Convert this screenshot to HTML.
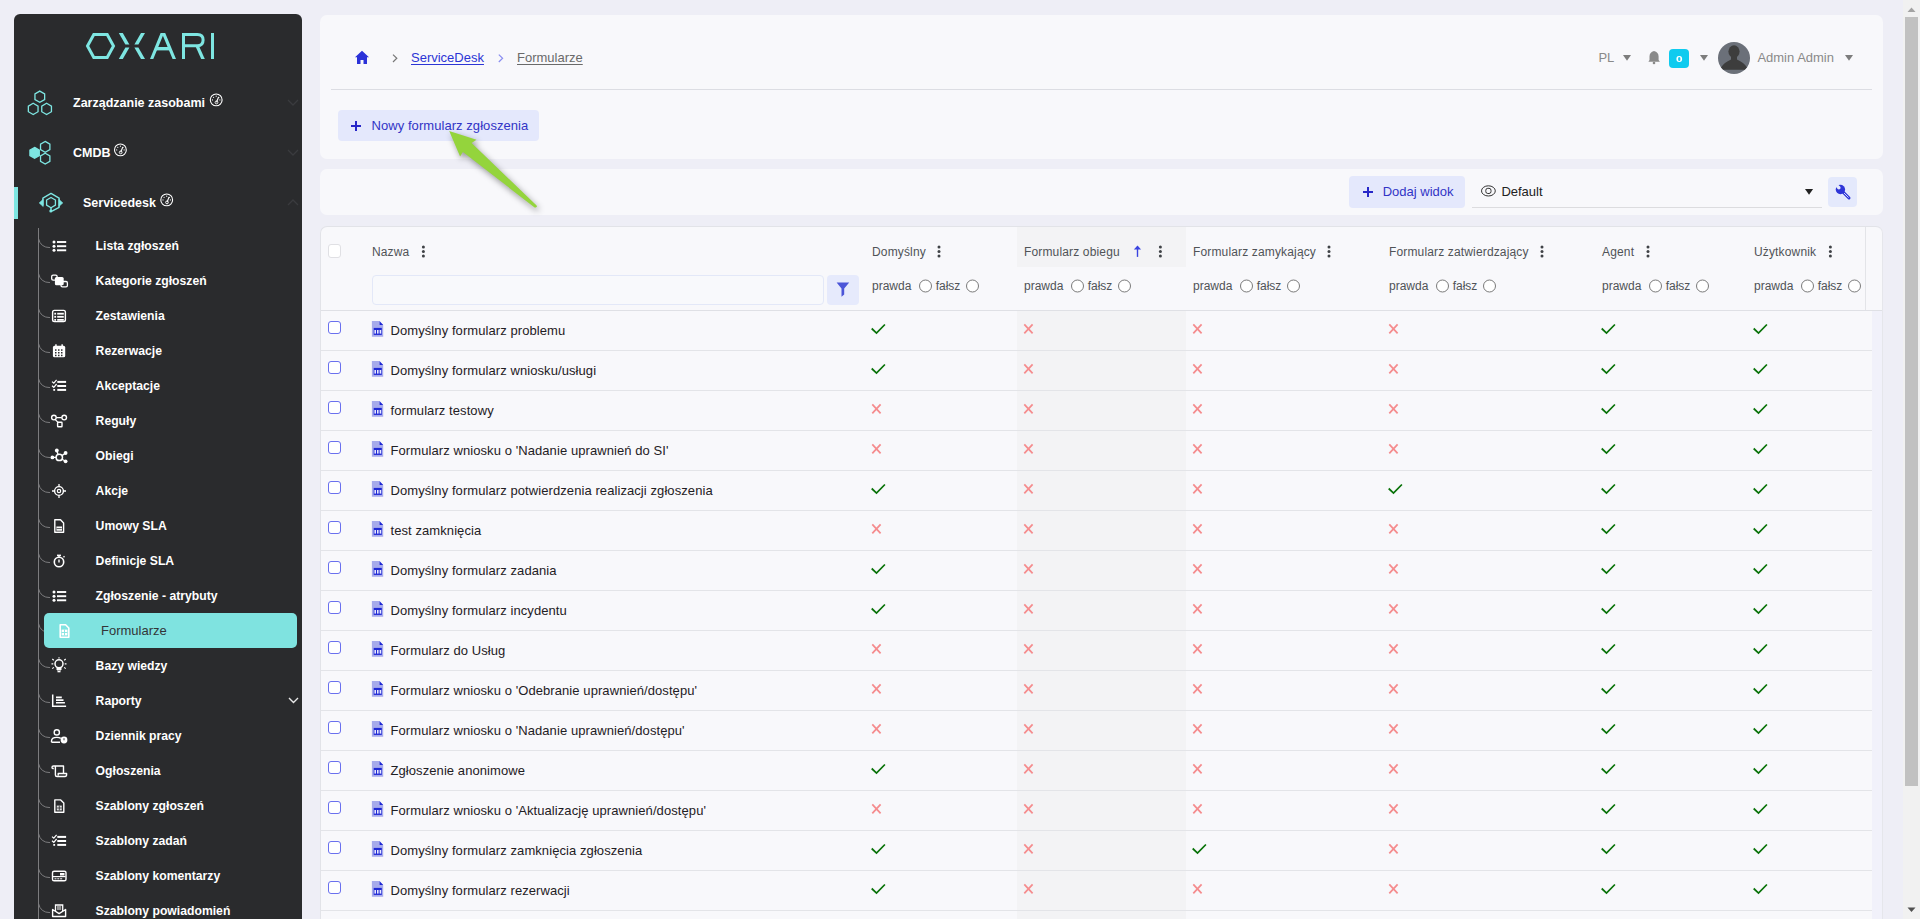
<!DOCTYPE html><html><head><meta charset="utf-8"><style>
*{box-sizing:border-box}
html,body{margin:0;padding:0}
body{width:1920px;height:919px;overflow:hidden;position:relative;background:#eeeef6;font-family:"Liberation Sans",sans-serif}
.t{position:absolute;white-space:nowrap;line-height:1.117}
.a{position:absolute}
svg{position:absolute;overflow:visible}
</style></head><body>
<div class="a" style="left:14px;top:14px;width:288px;height:920px;background:#2a2b2d;border-radius:6px"></div>
<svg style="left:0;top:0" width="1" height="1">
<polygon points="87.5,46 93.8,34.5 107.2,34.5 113.5,46 107.2,57.5 93.8,57.5" fill="none" stroke="#7ee6e2" stroke-width="3"/>
<g fill="#7ee6e2">
<polygon points="118.8,33 122.8,33 129.4,44.6 125.4,44.6"/>
<polygon points="125.4,47.4 129.4,47.4 122.8,59 118.8,59"/>
<polygon points="141,33 145,33 138.4,44.6 134.4,44.6"/>
<polygon points="134.4,47.4 138.4,47.4 145,59 141,59"/>
<polygon points="160.6,33 165.2,33 176,59 172.6,59 162.9,35.8 153.3,59 150,59"/>
<rect x="156" y="47" width="13.6" height="3.4"/>
<rect x="182" y="33" width="3" height="26"/>
<path d="M182 33 H197.5 Q204.6 33 204.6 40 Q204.6 47.2 197.5 47.2 H185 V44.2 H197.3 Q201.6 44.2 201.6 40 Q201.6 36 197.3 36 H182 Z"/>
<polygon points="195.6,46.5 199.2,46.5 204.8,59 201.2,59"/>
<rect x="211" y="33" width="3" height="26"/>
</g></svg>
<svg style="left:0;top:0" width="1" height="1" fill="none" stroke="#7ee6e2" stroke-width="1.3">
<polygon points="39.80,91.10 44.65,93.90 44.65,99.50 39.80,102.30 34.95,99.50 34.95,93.90"/>
<polygon points="33.20,103.30 38.05,106.10 38.05,111.70 33.20,114.50 28.35,111.70 28.35,106.10"/>
<polygon points="46.60,103.30 51.45,106.10 51.45,111.70 46.60,114.50 41.75,111.70 41.75,106.10"/>
<polygon points="34.60,147.40 39.28,150.10 39.28,155.50 34.60,158.20 29.92,155.50 29.92,150.10" fill="#7ee6e2"/>
<polygon points="45.20,141.40 49.88,144.10 49.88,149.50 45.20,152.20 40.52,149.50 40.52,144.10"/>
<polygon points="45.20,153.20 49.88,155.90 49.88,161.30 45.20,164.00 40.52,161.30 40.52,155.90"/>
</svg>
<svg style="left:0;top:0" width="1" height="1" fill="none" stroke="#7ee6e2" stroke-width="1.4" stroke-linejoin="round">
<path d="M42.9 205.6 V198.05 L51 193.4 L59.1 198.05 V207.35 L52 211.2"/>
<polygon points="51.00,197.50 55.42,200.05 55.42,205.15 51.00,207.70 46.58,205.15 46.58,200.05" stroke-width="1.3"/>
<polygon points="39.2,202.9 43.2,199.2 43.2,206.6" fill="#7ee6e2" stroke-width="0.6"/>
<polygon points="62.8,202.9 58.8,199.2 58.8,206.6" fill="#7ee6e2" stroke-width="0.6"/>
<path d="M51 207.6 V210.5" stroke-width="1.5"/>
<circle cx="50.8" cy="211" r="1.5" fill="#7ee6e2" stroke="none"/>
</svg>
<div class="t" style="left:73px;top:96.59px;font-size:12.5px;color:#ffffff;font-weight:700;">Zarządzanie zasobami</div>
<svg style="left:0;top:0" width="1" height="1"><circle cx="216.2" cy="99.9" r="5.9" fill="none" stroke="#fff" stroke-width="1.1"/><path d="M216.5 102.30000000000001 L218.6 97.0" stroke="#fff" stroke-width="1.1"/><circle cx="216.5" cy="102.4" r="1.4" fill="none" stroke="#fff" stroke-width="0.9"/><circle cx="216.20" cy="96.20" r="0.6" fill="#fff"/><circle cx="218.82" cy="97.28" r="0.6" fill="#fff"/><circle cx="219.90" cy="99.90" r="0.6" fill="#fff"/><circle cx="212.50" cy="99.90" r="0.6" fill="#fff"/><circle cx="213.58" cy="97.28" r="0.6" fill="#fff"/></svg>
<div class="t" style="left:73px;top:146.59px;font-size:12.5px;color:#ffffff;font-weight:700;">CMDB</div>
<svg style="left:0;top:0" width="1" height="1"><circle cx="120.4" cy="149.9" r="5.9" fill="none" stroke="#fff" stroke-width="1.1"/><path d="M120.7 152.3 L122.80000000000001 147.0" stroke="#fff" stroke-width="1.1"/><circle cx="120.7" cy="152.4" r="1.4" fill="none" stroke="#fff" stroke-width="0.9"/><circle cx="120.40" cy="146.20" r="0.6" fill="#fff"/><circle cx="123.02" cy="147.28" r="0.6" fill="#fff"/><circle cx="124.10" cy="149.90" r="0.6" fill="#fff"/><circle cx="116.70" cy="149.90" r="0.6" fill="#fff"/><circle cx="117.78" cy="147.28" r="0.6" fill="#fff"/></svg>
<div class="t" style="left:83px;top:196.59px;font-size:12.5px;color:#ffffff;font-weight:700;">Servicedesk</div>
<svg style="left:0;top:0" width="1" height="1"><circle cx="166.7" cy="199.9" r="5.9" fill="none" stroke="#fff" stroke-width="1.1"/><path d="M167.0 202.3 L169.1 197.0" stroke="#fff" stroke-width="1.1"/><circle cx="167.0" cy="202.4" r="1.4" fill="none" stroke="#fff" stroke-width="0.9"/><circle cx="166.70" cy="196.20" r="0.6" fill="#fff"/><circle cx="169.32" cy="197.28" r="0.6" fill="#fff"/><circle cx="170.40" cy="199.90" r="0.6" fill="#fff"/><circle cx="163.00" cy="199.90" r="0.6" fill="#fff"/><circle cx="164.08" cy="197.28" r="0.6" fill="#fff"/></svg>
<div class="a" style="left:14px;top:187px;width:4px;height:32px;background:#7ee6e2"></div>
<svg style="left:0;top:0" width="1" height="1" fill="none" stroke="#3a3b3e" stroke-width="1.3">
<path d="M288 100 L293 105 L298 100"/><path d="M288 150 L293 155 L298 150"/><path d="M288 205 L293 200 L298 205"/>
</svg>
<div class="a" style="left:38px;top:228px;width:1px;height:700px;background:#7c7c7e"></div>
<svg style="left:0;top:0" width="1" height="1" fill="none" stroke="#7c7c7e" stroke-width="1"><path d="M38.5 238.6 Q40.5 247.6 50 247.6"/><path d="M38.5 273.6 Q40.5 282.6 50 282.6"/><path d="M38.5 308.6 Q40.5 317.6 50 317.6"/><path d="M38.5 343.6 Q40.5 352.6 50 352.6"/><path d="M38.5 378.6 Q40.5 387.6 50 387.6"/><path d="M38.5 413.6 Q40.5 422.6 50 422.6"/><path d="M38.5 448.6 Q40.5 457.6 50 457.6"/><path d="M38.5 483.6 Q40.5 492.6 50 492.6"/><path d="M38.5 518.6 Q40.5 527.6 50 527.6"/><path d="M38.5 553.6 Q40.5 562.6 50 562.6"/><path d="M38.5 588.6 Q40.5 597.6 50 597.6"/><path d="M38.5 623.6 Q40.5 632.6 50 632.6"/><path d="M38.5 658.6 Q40.5 667.6 50 667.6"/><path d="M38.5 693.6 Q40.5 702.6 50 702.6"/><path d="M38.5 728.6 Q40.5 737.6 50 737.6"/><path d="M38.5 763.6 Q40.5 772.6 50 772.6"/><path d="M38.5 798.6 Q40.5 807.6 50 807.6"/><path d="M38.5 833.6 Q40.5 842.6 50 842.6"/><path d="M38.5 868.6 Q40.5 877.6 50 877.6"/><path d="M38.5 903.6 Q40.5 912.6 50 912.6"/></svg>
<div class="a" style="left:44px;top:613px;width:253px;height:35px;background:#7fe3e0;border-radius:5px"></div>
<div class="t" style="left:95.6px;top:239.86px;font-size:12.2px;color:#ffffff;font-weight:700;">Lista zgłoszeń</div>
<div class="t" style="left:95.6px;top:274.86px;font-size:12.2px;color:#ffffff;font-weight:700;">Kategorie zgłoszeń</div>
<div class="t" style="left:95.6px;top:309.86px;font-size:12.2px;color:#ffffff;font-weight:700;">Zestawienia</div>
<div class="t" style="left:95.6px;top:344.86px;font-size:12.2px;color:#ffffff;font-weight:700;">Rezerwacje</div>
<div class="t" style="left:95.6px;top:379.86px;font-size:12.2px;color:#ffffff;font-weight:700;">Akceptacje</div>
<div class="t" style="left:95.6px;top:414.86px;font-size:12.2px;color:#ffffff;font-weight:700;">Reguły</div>
<div class="t" style="left:95.6px;top:449.86px;font-size:12.2px;color:#ffffff;font-weight:700;">Obiegi</div>
<div class="t" style="left:95.6px;top:484.86px;font-size:12.2px;color:#ffffff;font-weight:700;">Akcje</div>
<div class="t" style="left:95.6px;top:519.86px;font-size:12.2px;color:#ffffff;font-weight:700;">Umowy SLA</div>
<div class="t" style="left:95.6px;top:554.86px;font-size:12.2px;color:#ffffff;font-weight:700;">Definicje SLA</div>
<div class="t" style="left:95.6px;top:589.86px;font-size:12.2px;color:#ffffff;font-weight:700;">Zgłoszenie - atrybuty</div>
<div class="t" style="left:101px;top:624.44px;font-size:13px;color:#333538;font-weight:400;">Formularze</div>
<div class="t" style="left:95.6px;top:659.86px;font-size:12.2px;color:#ffffff;font-weight:700;">Bazy wiedzy</div>
<div class="t" style="left:95.6px;top:694.86px;font-size:12.2px;color:#ffffff;font-weight:700;">Raporty</div>
<div class="t" style="left:95.6px;top:729.86px;font-size:12.2px;color:#ffffff;font-weight:700;">Dziennik pracy</div>
<div class="t" style="left:95.6px;top:764.86px;font-size:12.2px;color:#ffffff;font-weight:700;">Ogłoszenia</div>
<div class="t" style="left:95.6px;top:799.86px;font-size:12.2px;color:#ffffff;font-weight:700;">Szablony zgłoszeń</div>
<div class="t" style="left:95.6px;top:834.86px;font-size:12.2px;color:#ffffff;font-weight:700;">Szablony zadań</div>
<div class="t" style="left:95.6px;top:869.86px;font-size:12.2px;color:#ffffff;font-weight:700;">Szablony komentarzy</div>
<div class="t" style="left:95.6px;top:904.86px;font-size:12.2px;color:#ffffff;font-weight:700;">Szablony powiadomień</div>
<svg style="left:0;top:0" width="1" height="1"><circle cx="54" cy="242.0" r="1.5" fill="#ffffff"/><rect x="57" y="241.05" width="9.2" height="1.9" fill="#ffffff"/><circle cx="54" cy="246.2" r="1.5" fill="#ffffff"/><rect x="57" y="245.25" width="9.2" height="1.9" fill="#ffffff"/><circle cx="54" cy="250.3" r="1.5" fill="#ffffff"/><rect x="57" y="249.35000000000002" width="9.2" height="1.9" fill="#ffffff"/><rect x="51.7" y="275.1" width="5.4" height="5" rx="1.4" fill="none" stroke="#ffffff" stroke-width="1.3"/><rect x="61" y="281.5" width="6.4" height="5.4" rx="1.4" fill="none" stroke="#ffffff" stroke-width="1.3"/><rect x="54.9" y="276.9" width="8.8" height="8.3" rx="1.5" fill="#ffffff"/><rect x="52.6" y="310.4" width="12.8" height="11.2" rx="1.8" fill="none" stroke="#ffffff" stroke-width="1.4"/><rect x="54.3" y="312.8" width="1.8" height="1.8" fill="#ffffff"/><rect x="57.2" y="312.8" width="6.6" height="1.8" fill="#ffffff"/><rect x="54.3" y="315.9" width="1.8" height="1.8" fill="#ffffff"/><rect x="57.2" y="315.9" width="6.6" height="1.8" fill="#ffffff"/><rect x="54.3" y="319.0" width="1.8" height="1.8" fill="#ffffff"/><rect x="57.2" y="319.0" width="6.6" height="1.8" fill="#ffffff"/><rect x="52.9" y="345.8" width="12.3" height="11.5" rx="1.6" fill="#ffffff"/><rect x="55.2" y="344.3" width="1.5" height="2.5" fill="#ffffff"/><rect x="61.4" y="344.3" width="1.5" height="2.5" fill="#ffffff"/><rect x="55" y="349.3" width="1.5" height="1.5" fill="#2a2b2d"/><rect x="58" y="349.3" width="1.5" height="1.5" fill="#2a2b2d"/><rect x="61" y="349.3" width="1.5" height="1.5" fill="#2a2b2d"/><rect x="55" y="352.0" width="1.5" height="1.5" fill="#2a2b2d"/><rect x="58" y="352.0" width="1.5" height="1.5" fill="#2a2b2d"/><rect x="61" y="352.0" width="1.5" height="1.5" fill="#2a2b2d"/><rect x="55" y="354.7" width="1.5" height="1.5" fill="#2a2b2d"/><rect x="58" y="354.7" width="1.5" height="1.5" fill="#2a2b2d"/><rect x="61" y="354.7" width="1.5" height="1.5" fill="#2a2b2d"/><path d="M52 381.59999999999997 L53.8 383.2 L56.6 379.9" fill="none" stroke="#ffffff" stroke-width="1.2"/><rect x="57.3" y="380.9" width="8.8" height="2" fill="#ffffff"/><path d="M52 385.7 L53.8 387.3 L56.6 384.0" fill="none" stroke="#ffffff" stroke-width="1.2"/><rect x="57.3" y="385.0" width="8.8" height="2" fill="#ffffff"/><rect x="53.3" y="389.0" width="1.8" height="1.8" fill="#ffffff"/><rect x="57.3" y="388.9" width="8.8" height="2" fill="#ffffff"/><path d="M56.4 417.6 H61.7 M55.3 419.6 L58 422.4" stroke="#ffffff" stroke-width="1.3"/><circle cx="53.9" cy="417.6" r="2.3" fill="none" stroke="#ffffff" stroke-width="1.4"/><circle cx="64.2" cy="417.6" r="2.3" fill="none" stroke="#ffffff" stroke-width="1.4"/><rect x="57.6" y="422.3" width="4.4" height="4.4" rx="0.5" fill="none" stroke="#ffffff" stroke-width="1.4"/><path d="M52.4 457.4 H56 M56.8 450.5 L58 454.2 M65.6 453.0 L62 455.6 M65.6 461.3 L62 459.2" stroke="#ffffff" stroke-width="1.3"/><circle cx="59.3" cy="457.4" r="3.2" fill="none" stroke="#ffffff" stroke-width="1.5"/><circle cx="56.8" cy="450.5" r="1.9" fill="#ffffff"/><circle cx="65.6" cy="453.0" r="1.9" fill="#ffffff"/><circle cx="65.6" cy="461.3" r="1.9" fill="#ffffff"/><circle cx="52.4" cy="457.4" r="1.9" fill="#ffffff"/><circle cx="59" cy="491.0" r="4.4" fill="none" stroke="#ffffff" stroke-width="1.4"/><circle cx="59" cy="491.0" r="1.7" fill="none" stroke="#ffffff" stroke-width="1.2"/><path d="M59 484.0 V486.6 M59 495.4 V498.0 M52 491.0 H54.6 M63.4 491.0 H66" stroke="#ffffff" stroke-width="1.3"/><path d="M54.8 519.8 H60.5 L63.6 523.0 V532.3 H54.8 Z" fill="none" stroke="#ffffff" stroke-width="1.4" stroke-linejoin="round"/><rect x="56.4" y="526.5" width="5.6" height="4.2" fill="#ffffff"/><path d="M56.6 528.6 H61.8" stroke="#2a2b2d" stroke-width="0.8"/><circle cx="59" cy="562.0" r="4.7" fill="none" stroke="#ffffff" stroke-width="1.6"/><rect x="57" y="554.6" width="4" height="1.6" fill="#ffffff"/><path d="M59 556.0 V557.5 M59 559.5 V562.5 M63.5 557.3 L64.5 556.3" stroke="#ffffff" stroke-width="1.4"/><circle cx="54" cy="592.0" r="1.5" fill="#ffffff"/><rect x="57" y="591.05" width="9.2" height="1.9" fill="#ffffff"/><circle cx="54" cy="596.2" r="1.5" fill="#ffffff"/><rect x="57" y="595.25" width="9.2" height="1.9" fill="#ffffff"/><circle cx="54" cy="600.3" r="1.5" fill="#ffffff"/><rect x="57" y="599.3499999999999" width="9.2" height="1.9" fill="#ffffff"/><path d="M60.2 624.8 H65.6 L68.8 628.0 V637.2 H60.2 Z" fill="none" stroke="#ffffff" stroke-width="1.6" stroke-linejoin="round"/><rect x="61.6" y="629.6" width="5.8" height="5.8" fill="#ffffff"/><path d="M61.6 632.5 H67.4 M64.5 629.6 V635.4" stroke="#7fe3e0" stroke-width="0.9"/><circle cx="59" cy="663.8" r="4" fill="none" stroke="#ffffff" stroke-width="1.5"/><path d="M57 667.5 V670.0 H61 V667.5" fill="#ffffff" stroke="#ffffff" stroke-width="1"/><rect x="57.5" y="671.0" width="3" height="1.3" fill="#ffffff"/><path d="M51.5 663.8 H53.3 M64.7 663.8 H66.5 M52.3 659.0 L53.8 660.2 M65.7 659.0 L64.2 660.2 M52.3 668.6 L53.8 667.4 M65.7 668.6 L64.2 667.4 M59 657.2 V658.4" stroke="#ffffff" stroke-width="1.2"/><path d="M52.7 694.6 V706.2 H66.1" fill="none" stroke="#ffffff" stroke-width="1.5"/><path d="M56 697.4 H61.8 M56 700.1 H63.5 M56 702.8 H64.9" stroke="#ffffff" stroke-width="1.6"/><circle cx="56.8" cy="732.4" r="2.6" fill="none" stroke="#ffffff" stroke-width="1.4"/><path d="M51.5 742.3 V741.0 Q51.5 737.4 56.8 737.4 Q59.5 737.4 60.8 738.4 M51.5 742.3 H60" fill="none" stroke="#ffffff" stroke-width="1.4"/><circle cx="64" cy="740.0" r="3.4" fill="#ffffff"/><path d="M64 738.2 V740.3" stroke="#2a2b2d" stroke-width="0.9"/><path d="M53.8 768.5 H52.8 Q52 768.5 52 767.3 Q52 766.0 53.5 766.0 H63.5 V773.5 M55.4 766.5 V775.0 Q55.4 776.5 57 776.5 H65 Q66.6 776.5 66.6 774.5 V773.5 H58.2 V775.5" fill="none" stroke="#ffffff" stroke-width="1.4" stroke-linejoin="round"/><path d="M54.8 799.9 H60.7 L63.8 803.0 V812.3 H54.8 Z" fill="none" stroke="#ffffff" stroke-width="1.4" stroke-linejoin="round"/><rect x="56.8" y="805.6" width="5" height="4.8" fill="#ffffff" opacity="0.85"/><path d="M56.8 808.0 H61.8 M59.3 805.6 V810.4" stroke="#2a2b2d" stroke-width="0.8"/><path d="M52 836.6 L53.8 838.1999999999999 L56.6 834.9" fill="none" stroke="#ffffff" stroke-width="1.2"/><rect x="57.3" y="835.9" width="8.8" height="2" fill="#ffffff"/><path d="M52 840.7 L53.8 842.3 L56.6 839.0" fill="none" stroke="#ffffff" stroke-width="1.2"/><rect x="57.3" y="840.0" width="8.8" height="2" fill="#ffffff"/><rect x="53.3" y="844.0" width="1.8" height="1.8" fill="#ffffff"/><rect x="57.3" y="843.9" width="8.8" height="2" fill="#ffffff"/><rect x="52.5" y="871.2" width="13.5" height="9.6" rx="1.6" fill="none" stroke="#ffffff" stroke-width="1.4"/><rect x="60" y="873.0" width="4.5" height="2.5" fill="#ffffff"/><path d="M53 876.6 H65.5" stroke="#ffffff" stroke-width="1.2"/><path d="M54.5 878.8 H63" stroke="#ffffff" stroke-width="1" stroke-dasharray="2 0.8"/><path d="M52.6 909.5 V916.5 H65.6 V909.5 L59.1 913.6 Z" fill="none" stroke="#ffffff" stroke-width="1.4" stroke-linejoin="round"/><path d="M55.5 911.0 V905.0 H62.7 V911.0" fill="none" stroke="#ffffff" stroke-width="1.3"/><path d="M57 907.0 H61.2 M57 909.0 H61.2" stroke="#ffffff" stroke-width="1"/></svg>
<svg style="left:0;top:0" width="1" height="1"><path d="M289 698 L293.5 702.5 L298 698" fill="none" stroke="#e8e8e8" stroke-width="1.4"/></svg>
<div class="a" style="left:320px;top:15px;width:1563px;height:144px;background:#f8f8fb;border-radius:7px"></div>
<svg style="left:0;top:0" width="1" height="1"><path d="M362 50.8 L355 57.2 L357 57.2 L357 64 L360.5 64 L360.5 60 L363.5 60 L363.5 64 L367 64 L367 57.2 L369 57.2 Z" fill="#2b32d8"/></svg>
<svg style="left:0;top:0" width="1" height="1" fill="none" stroke-width="1.2"><path d="M393 54.6 L396.8 58.3 L393 62" stroke="#777"/><path d="M498.8 54.6 L502.6 58.3 L498.8 62" stroke="#8a8ef0"/></svg>
<div class="t" style="left:411px;top:51.13px;font-size:13px;color:#2c35d5;font-weight:400;text-decoration:underline;text-underline-offset:1.5px">ServiceDesk</div>
<div class="t" style="left:517px;top:51.13px;font-size:13px;color:#6a6a6a;font-weight:400;text-decoration:underline;text-underline-offset:1.5px">Formularze</div>
<div class="t" style="left:1598.4px;top:51.44px;font-size:13px;color:#8a8a8a;font-weight:400;">PL</div>
<svg style="left:0;top:0" width="1" height="1"><polygon points="1623,55 1631,55 1627.0,60.8" fill="#7d7d7d"/><polygon points="1700,55 1708,55 1704.0,60.8" fill="#7d7d7d"/><polygon points="1845,55 1853,55 1849.0,60.8" fill="#7d7d7d"/></svg>
<svg style="left:0;top:0" width="1" height="1"><path d="M1654 51 Q1649.5 52 1649.5 56.5 L1649.5 60 L1648.4 61.8 L1659.9 61.8 L1658.6 60 L1658.6 56.5 Q1658.6 52 1654 51 Z" fill="#8a8a8a"/><circle cx="1654" cy="63" r="1.3" fill="#8a8a8a"/></svg>
<div class="a" style="left:1669px;top:49px;width:20px;height:19px;background:#0fcbef;border-radius:4px"></div>
<div class="t" style="left:1676.3px;top:53.50px;font-size:9.5px;color:#ffffff;font-weight:700;transform:scaleX(1.25);transform-origin:0 0">0</div>
<div class="a" style="left:1718px;top:42px;width:32px;height:32px;background:#6b7079;border-radius:50%;overflow:hidden"><svg style="left:0;top:0" width="32" height="32"><ellipse cx="16" cy="9.6" rx="5.6" ry="6.3" fill="#3d3d3d"/><path d="M3 25.5 Q6 20.5 13 17.5 V14 H19 V17.5 Q26 20.5 29 25.5 V27.8 H3 Z" fill="#3d3d3d"/></svg></div>
<div class="t" style="left:1757.4px;top:51.44px;font-size:13px;color:#8a8a8a;font-weight:400;">Admin Admin</div>
<div class="a" style="left:331px;top:89px;width:1541px;height:1px;background:#dcdde3"></div>
<div class="a" style="left:338px;top:110px;width:201px;height:31px;background:#e4e8fc;border-radius:4px"></div>
<svg style="left:0;top:0" width="1" height="1"><path d="M351 126 H361 M356 121 V131" stroke="#2727c8" stroke-width="2"/></svg>
<div class="t" style="left:371.5px;top:119.23px;font-size:13px;color:#3234c6;font-weight:400;letter-spacing:0.06px">Nowy formularz zgłoszenia</div>
<div class="a" style="left:320px;top:169px;width:1563px;height:46px;background:#f8f8fb;border-radius:7px"></div>
<div class="a" style="left:1349px;top:176px;width:116px;height:31.5px;background:#e4e8fc;border-radius:4px"></div>
<svg style="left:0;top:0" width="1" height="1"><path d="M1363 192 H1373 M1368 187 V197" stroke="#2727c8" stroke-width="2"/></svg>
<div class="t" style="left:1382.7px;top:184.94px;font-size:13px;color:#3234c6;font-weight:400;">Dodaj widok</div>
<div class="a" style="left:1472px;top:207px;width:350px;height:1px;background:#dcdcdf"></div>
<svg style="left:0;top:0" width="1" height="1"><ellipse cx="1488.4" cy="190.9" rx="6.9" ry="5.1" fill="none" stroke="#333" stroke-width="1"/><rect x="1485.8" y="188.3" width="5.2" height="5.2" rx="2" fill="none" stroke="#333" stroke-width="1"/></svg>
<div class="t" style="left:1501.4px;top:184.94px;font-size:13px;color:#222;font-weight:400;">Default</div>
<svg style="left:0;top:0" width="1" height="1"><polygon points="1805,189 1813.1,189 1809.05,194.7" fill="#222"/></svg>
<div class="a" style="left:1828px;top:177px;width:29px;height:30px;background:#e4e9fc;border-radius:4px"></div>
<svg style="left:0;top:0" width="1" height="1"><path d="M1843 192 L1849 198" stroke="#2e35d8" stroke-width="3" stroke-linecap="round"/><path d="M1844 193 L1848.6 197.6" stroke="#e4e9fc" stroke-width="0.9"/><circle cx="1840.4" cy="189.5" r="4.7" fill="#2e35d8"/><circle cx="1838.9" cy="187.7" r="1.7" fill="#e4e9fc"/><path d="M1838.9 187.7 L1836.4 185.2" stroke="#e4e9fc" stroke-width="3.2"/></svg>
<div class="a" style="left:320px;top:225.5px;width:1563px;height:720px;background:#f8f8fb;border:1px solid #e2e3e8;border-right-color:#e5e6eb;border-radius:7px"></div>
<div class="a" style="left:1017px;top:227px;width:169px;height:40px;background:#f3f3f5"></div>
<div class="a" style="left:1017px;top:311px;width:169px;height:620px;background:#f3f3f5"></div>
<div class="a" style="left:1872px;top:311px;width:10px;height:620px;background:#f1f1fa"></div>
<div class="a" style="left:1865px;top:227px;width:1px;height:83px;background:#e3e4e8"></div>
<div class="a" style="left:321px;top:310px;width:1561px;height:1px;background:#dfe0e5"></div>
<div class="a" style="left:328px;top:243.5px;width:13px;height:14px;background:#fff;border:1px solid #e0e0e4;border-radius:3px"></div>
<div class="t" style="left:372px;top:246.14px;font-size:12px;color:#505357;font-weight:400;letter-spacing:0.1px">Nazwa</div>
<div class="t" style="left:872px;top:246.14px;font-size:12px;color:#505357;font-weight:400;letter-spacing:0.15px">Domyślny</div>
<div class="t" style="left:1024px;top:246.14px;font-size:12px;color:#505357;font-weight:400;letter-spacing:0.15px">Formularz obiegu</div>
<div class="t" style="left:1193px;top:246.14px;font-size:12px;color:#505357;font-weight:400;letter-spacing:0.15px">Formularz zamykający</div>
<div class="t" style="left:1389px;top:246.14px;font-size:12px;color:#505357;font-weight:400;letter-spacing:0.15px">Formularz zatwierdzający</div>
<div class="t" style="left:1602px;top:246.14px;font-size:12px;color:#505357;font-weight:400;letter-spacing:0.15px">Agent</div>
<div class="t" style="left:1754px;top:246.14px;font-size:12px;color:#505357;font-weight:400;letter-spacing:0.15px">Użytkownik</div>
<svg style="left:0;top:0" width="1" height="1" fill="#3f4246"><circle cx="423.4" cy="247" r="1.5"/><circle cx="423.4" cy="251.5" r="1.5"/><circle cx="423.4" cy="256" r="1.5"/><circle cx="939" cy="247" r="1.5"/><circle cx="939" cy="251.5" r="1.5"/><circle cx="939" cy="256" r="1.5"/><circle cx="1160.4" cy="247" r="1.5"/><circle cx="1160.4" cy="251.5" r="1.5"/><circle cx="1160.4" cy="256" r="1.5"/><circle cx="1329" cy="247" r="1.5"/><circle cx="1329" cy="251.5" r="1.5"/><circle cx="1329" cy="256" r="1.5"/><circle cx="1542" cy="247" r="1.5"/><circle cx="1542" cy="251.5" r="1.5"/><circle cx="1542" cy="256" r="1.5"/><circle cx="1648" cy="247" r="1.5"/><circle cx="1648" cy="251.5" r="1.5"/><circle cx="1648" cy="256" r="1.5"/><circle cx="1830.4" cy="247" r="1.5"/><circle cx="1830.4" cy="251.5" r="1.5"/><circle cx="1830.4" cy="256" r="1.5"/></svg>
<svg style="left:0;top:0" width="1" height="1"><path d="M1137.5 247 V256.9" stroke="#3a44e0" stroke-width="1.4"/><polygon points="1133.9,249.6 1137.5,245.4 1141.1,249.6" fill="#3a44e0"/></svg>
<div class="a" style="left:372px;top:274.5px;width:451.5px;height:30px;border:1px solid #e3e8f8;border-radius:4px;background:#f8f9fc"></div>
<div class="a" style="left:827px;top:274.5px;width:31.5px;height:30px;background:#e6eafc;border-radius:4px"></div>
<svg style="left:0;top:0" width="1" height="1"><path d="M836.6 282.6 H849.2 L844.2 288.5 V294.5 L841.5 296.8 V288.5 Z" fill="#4b55d8"/></svg>
<div class="t" style="left:872px;top:280.04px;font-size:12px;color:#505357;font-weight:400;">prawda</div>
<div class="t" style="left:935.7px;top:280.04px;font-size:12px;color:#505357;font-weight:400;">fałsz</div>
<div class="t" style="left:1024px;top:280.04px;font-size:12px;color:#505357;font-weight:400;">prawda</div>
<div class="t" style="left:1087.7px;top:280.04px;font-size:12px;color:#505357;font-weight:400;">fałsz</div>
<div class="t" style="left:1193px;top:280.04px;font-size:12px;color:#505357;font-weight:400;">prawda</div>
<div class="t" style="left:1256.7px;top:280.04px;font-size:12px;color:#505357;font-weight:400;">fałsz</div>
<div class="t" style="left:1389px;top:280.04px;font-size:12px;color:#505357;font-weight:400;">prawda</div>
<div class="t" style="left:1452.7px;top:280.04px;font-size:12px;color:#505357;font-weight:400;">fałsz</div>
<div class="t" style="left:1602px;top:280.04px;font-size:12px;color:#505357;font-weight:400;">prawda</div>
<div class="t" style="left:1665.7px;top:280.04px;font-size:12px;color:#505357;font-weight:400;">fałsz</div>
<div class="t" style="left:1754px;top:280.04px;font-size:12px;color:#505357;font-weight:400;">prawda</div>
<div class="t" style="left:1817.7px;top:280.04px;font-size:12px;color:#505357;font-weight:400;">fałsz</div>
<svg style="left:0;top:0" width="1" height="1"><circle cx="925.5" cy="286" r="6" fill="#fff" stroke="#7a7a7a" stroke-width="1"/><circle cx="972.5" cy="286" r="6" fill="#fff" stroke="#7a7a7a" stroke-width="1"/><circle cx="1077.5" cy="286" r="6" fill="#fff" stroke="#7a7a7a" stroke-width="1"/><circle cx="1124.5" cy="286" r="6" fill="#fff" stroke="#7a7a7a" stroke-width="1"/><circle cx="1246.5" cy="286" r="6" fill="#fff" stroke="#7a7a7a" stroke-width="1"/><circle cx="1293.5" cy="286" r="6" fill="#fff" stroke="#7a7a7a" stroke-width="1"/><circle cx="1442.5" cy="286" r="6" fill="#fff" stroke="#7a7a7a" stroke-width="1"/><circle cx="1489.5" cy="286" r="6" fill="#fff" stroke="#7a7a7a" stroke-width="1"/><circle cx="1655.5" cy="286" r="6" fill="#fff" stroke="#7a7a7a" stroke-width="1"/><circle cx="1702.5" cy="286" r="6" fill="#fff" stroke="#7a7a7a" stroke-width="1"/><circle cx="1807.5" cy="286" r="6" fill="#fff" stroke="#7a7a7a" stroke-width="1"/><circle cx="1854.5" cy="286" r="6" fill="#fff" stroke="#7a7a7a" stroke-width="1"/></svg>
<div class="t" style="left:390.5px;top:324.04px;font-size:13px;color:#1f2024;font-weight:400;letter-spacing:0.08px">Domyślny formularz problemu</div>
<div class="t" style="left:390.5px;top:364.04px;font-size:13px;color:#1f2024;font-weight:400;letter-spacing:0.08px">Domyślny formularz wniosku/usługi</div>
<div class="t" style="left:390.5px;top:404.04px;font-size:13px;color:#1f2024;font-weight:400;letter-spacing:0.08px">formularz testowy</div>
<div class="t" style="left:390.5px;top:444.04px;font-size:13px;color:#1f2024;font-weight:400;letter-spacing:0.08px">Formularz wniosku o 'Nadanie uprawnień do SI'</div>
<div class="t" style="left:390.5px;top:484.04px;font-size:13px;color:#1f2024;font-weight:400;letter-spacing:0.08px">Domyślny formularz potwierdzenia realizacji zgłoszenia</div>
<div class="t" style="left:390.5px;top:524.03px;font-size:13px;color:#1f2024;font-weight:400;letter-spacing:0.08px">test zamknięcia</div>
<div class="t" style="left:390.5px;top:564.03px;font-size:13px;color:#1f2024;font-weight:400;letter-spacing:0.08px">Domyślny formularz zadania</div>
<div class="t" style="left:390.5px;top:604.03px;font-size:13px;color:#1f2024;font-weight:400;letter-spacing:0.08px">Domyślny formularz incydentu</div>
<div class="t" style="left:390.5px;top:644.03px;font-size:13px;color:#1f2024;font-weight:400;letter-spacing:0.08px">Formularz do Usług</div>
<div class="t" style="left:390.5px;top:684.03px;font-size:13px;color:#1f2024;font-weight:400;letter-spacing:0.08px">Formularz wniosku o 'Odebranie uprawnień/dostępu'</div>
<div class="t" style="left:390.5px;top:724.03px;font-size:13px;color:#1f2024;font-weight:400;letter-spacing:0.08px">Formularz wniosku o 'Nadanie uprawnień/dostępu'</div>
<div class="t" style="left:390.5px;top:764.03px;font-size:13px;color:#1f2024;font-weight:400;letter-spacing:0.08px">Zgłoszenie anonimowe</div>
<div class="t" style="left:390.5px;top:804.03px;font-size:13px;color:#1f2024;font-weight:400;letter-spacing:0.08px">Formularz wniosku o 'Aktualizację uprawnień/dostępu'</div>
<div class="t" style="left:390.5px;top:844.03px;font-size:13px;color:#1f2024;font-weight:400;letter-spacing:0.08px">Domyślny formularz zamknięcia zgłoszenia</div>
<div class="t" style="left:390.5px;top:884.03px;font-size:13px;color:#1f2024;font-weight:400;letter-spacing:0.08px">Domyślny formularz rezerwacji</div>
<div class="a" style="left:328px;top:321px;width:13px;height:13px;background:#fff;border:1.3px solid #6a70ee;border-radius:3px"></div><div class="a" style="left:321px;top:350px;width:1551px;height:1px;background:#e3e4e8"></div><div class="a" style="left:328px;top:361px;width:13px;height:13px;background:#fff;border:1.3px solid #6a70ee;border-radius:3px"></div><div class="a" style="left:321px;top:390px;width:1551px;height:1px;background:#e3e4e8"></div><div class="a" style="left:328px;top:401px;width:13px;height:13px;background:#fff;border:1.3px solid #6a70ee;border-radius:3px"></div><div class="a" style="left:321px;top:430px;width:1551px;height:1px;background:#e3e4e8"></div><div class="a" style="left:328px;top:441px;width:13px;height:13px;background:#fff;border:1.3px solid #6a70ee;border-radius:3px"></div><div class="a" style="left:321px;top:470px;width:1551px;height:1px;background:#e3e4e8"></div><div class="a" style="left:328px;top:481px;width:13px;height:13px;background:#fff;border:1.3px solid #6a70ee;border-radius:3px"></div><div class="a" style="left:321px;top:510px;width:1551px;height:1px;background:#e3e4e8"></div><div class="a" style="left:328px;top:521px;width:13px;height:13px;background:#fff;border:1.3px solid #6a70ee;border-radius:3px"></div><div class="a" style="left:321px;top:550px;width:1551px;height:1px;background:#e3e4e8"></div><div class="a" style="left:328px;top:561px;width:13px;height:13px;background:#fff;border:1.3px solid #6a70ee;border-radius:3px"></div><div class="a" style="left:321px;top:590px;width:1551px;height:1px;background:#e3e4e8"></div><div class="a" style="left:328px;top:601px;width:13px;height:13px;background:#fff;border:1.3px solid #6a70ee;border-radius:3px"></div><div class="a" style="left:321px;top:630px;width:1551px;height:1px;background:#e3e4e8"></div><div class="a" style="left:328px;top:641px;width:13px;height:13px;background:#fff;border:1.3px solid #6a70ee;border-radius:3px"></div><div class="a" style="left:321px;top:670px;width:1551px;height:1px;background:#e3e4e8"></div><div class="a" style="left:328px;top:681px;width:13px;height:13px;background:#fff;border:1.3px solid #6a70ee;border-radius:3px"></div><div class="a" style="left:321px;top:710px;width:1551px;height:1px;background:#e3e4e8"></div><div class="a" style="left:328px;top:721px;width:13px;height:13px;background:#fff;border:1.3px solid #6a70ee;border-radius:3px"></div><div class="a" style="left:321px;top:750px;width:1551px;height:1px;background:#e3e4e8"></div><div class="a" style="left:328px;top:761px;width:13px;height:13px;background:#fff;border:1.3px solid #6a70ee;border-radius:3px"></div><div class="a" style="left:321px;top:790px;width:1551px;height:1px;background:#e3e4e8"></div><div class="a" style="left:328px;top:801px;width:13px;height:13px;background:#fff;border:1.3px solid #6a70ee;border-radius:3px"></div><div class="a" style="left:321px;top:830px;width:1551px;height:1px;background:#e3e4e8"></div><div class="a" style="left:328px;top:841px;width:13px;height:13px;background:#fff;border:1.3px solid #6a70ee;border-radius:3px"></div><div class="a" style="left:321px;top:870px;width:1551px;height:1px;background:#e3e4e8"></div><div class="a" style="left:328px;top:881px;width:13px;height:13px;background:#fff;border:1.3px solid #6a70ee;border-radius:3px"></div><div class="a" style="left:321px;top:910px;width:1551px;height:1px;background:#e3e4e8"></div>
<svg style="left:0;top:0" width="1" height="1"><path d="M371.9 321 H379.6 L383.2 325 V336.7 H371.9 Z" fill="#a6aaeb"/><polygon points="379.6,321.3 383.2,325 379.6,325" fill="#1e28d4"/><rect x="373.7" y="327.9" width="8.1" height="7" fill="#1e28d4"/><rect x="374.4" y="330" width="1.6" height="3.6" fill="#e8e8ff"/><rect x="377.0" y="330" width="1.6" height="3.6" fill="#e8e8ff"/><rect x="379.59999999999997" y="330" width="1.6" height="3.6" fill="#e8e8ff"/><path d="M871.7 328.5 L876.5 333.1 L884.9 324.5" fill="none" stroke="#087208" stroke-width="1.75"/><path d="M1024.3 324.3 L1032.6 333.3 M1032.6 324.3 L1024.3 333.3" fill="none" stroke="#f58c8e" stroke-width="1.75"/><path d="M1193.3 324.3 L1201.6 333.3 M1201.6 324.3 L1193.3 333.3" fill="none" stroke="#f58c8e" stroke-width="1.75"/><path d="M1389.3 324.3 L1397.6 333.3 M1397.6 324.3 L1389.3 333.3" fill="none" stroke="#f58c8e" stroke-width="1.75"/><path d="M1601.7 328.5 L1606.5 333.1 L1614.9 324.5" fill="none" stroke="#087208" stroke-width="1.75"/><path d="M1753.7 328.5 L1758.5 333.1 L1766.9 324.5" fill="none" stroke="#087208" stroke-width="1.75"/><path d="M371.9 361 H379.6 L383.2 365 V376.7 H371.9 Z" fill="#a6aaeb"/><polygon points="379.6,361.3 383.2,365 379.6,365" fill="#1e28d4"/><rect x="373.7" y="367.9" width="8.1" height="7" fill="#1e28d4"/><rect x="374.4" y="370" width="1.6" height="3.6" fill="#e8e8ff"/><rect x="377.0" y="370" width="1.6" height="3.6" fill="#e8e8ff"/><rect x="379.59999999999997" y="370" width="1.6" height="3.6" fill="#e8e8ff"/><path d="M871.7 368.5 L876.5 373.1 L884.9 364.5" fill="none" stroke="#087208" stroke-width="1.75"/><path d="M1024.3 364.3 L1032.6 373.3 M1032.6 364.3 L1024.3 373.3" fill="none" stroke="#f58c8e" stroke-width="1.75"/><path d="M1193.3 364.3 L1201.6 373.3 M1201.6 364.3 L1193.3 373.3" fill="none" stroke="#f58c8e" stroke-width="1.75"/><path d="M1389.3 364.3 L1397.6 373.3 M1397.6 364.3 L1389.3 373.3" fill="none" stroke="#f58c8e" stroke-width="1.75"/><path d="M1601.7 368.5 L1606.5 373.1 L1614.9 364.5" fill="none" stroke="#087208" stroke-width="1.75"/><path d="M1753.7 368.5 L1758.5 373.1 L1766.9 364.5" fill="none" stroke="#087208" stroke-width="1.75"/><path d="M371.9 401 H379.6 L383.2 405 V416.7 H371.9 Z" fill="#a6aaeb"/><polygon points="379.6,401.3 383.2,405 379.6,405" fill="#1e28d4"/><rect x="373.7" y="407.9" width="8.1" height="7" fill="#1e28d4"/><rect x="374.4" y="410" width="1.6" height="3.6" fill="#e8e8ff"/><rect x="377.0" y="410" width="1.6" height="3.6" fill="#e8e8ff"/><rect x="379.59999999999997" y="410" width="1.6" height="3.6" fill="#e8e8ff"/><path d="M872.3 404.3 L880.6 413.3 M880.6 404.3 L872.3 413.3" fill="none" stroke="#f58c8e" stroke-width="1.75"/><path d="M1024.3 404.3 L1032.6 413.3 M1032.6 404.3 L1024.3 413.3" fill="none" stroke="#f58c8e" stroke-width="1.75"/><path d="M1193.3 404.3 L1201.6 413.3 M1201.6 404.3 L1193.3 413.3" fill="none" stroke="#f58c8e" stroke-width="1.75"/><path d="M1389.3 404.3 L1397.6 413.3 M1397.6 404.3 L1389.3 413.3" fill="none" stroke="#f58c8e" stroke-width="1.75"/><path d="M1601.7 408.5 L1606.5 413.1 L1614.9 404.5" fill="none" stroke="#087208" stroke-width="1.75"/><path d="M1753.7 408.5 L1758.5 413.1 L1766.9 404.5" fill="none" stroke="#087208" stroke-width="1.75"/><path d="M371.9 441 H379.6 L383.2 445 V456.7 H371.9 Z" fill="#a6aaeb"/><polygon points="379.6,441.3 383.2,445 379.6,445" fill="#1e28d4"/><rect x="373.7" y="447.9" width="8.1" height="7" fill="#1e28d4"/><rect x="374.4" y="450" width="1.6" height="3.6" fill="#e8e8ff"/><rect x="377.0" y="450" width="1.6" height="3.6" fill="#e8e8ff"/><rect x="379.59999999999997" y="450" width="1.6" height="3.6" fill="#e8e8ff"/><path d="M872.3 444.3 L880.6 453.3 M880.6 444.3 L872.3 453.3" fill="none" stroke="#f58c8e" stroke-width="1.75"/><path d="M1024.3 444.3 L1032.6 453.3 M1032.6 444.3 L1024.3 453.3" fill="none" stroke="#f58c8e" stroke-width="1.75"/><path d="M1193.3 444.3 L1201.6 453.3 M1201.6 444.3 L1193.3 453.3" fill="none" stroke="#f58c8e" stroke-width="1.75"/><path d="M1389.3 444.3 L1397.6 453.3 M1397.6 444.3 L1389.3 453.3" fill="none" stroke="#f58c8e" stroke-width="1.75"/><path d="M1601.7 448.5 L1606.5 453.1 L1614.9 444.5" fill="none" stroke="#087208" stroke-width="1.75"/><path d="M1753.7 448.5 L1758.5 453.1 L1766.9 444.5" fill="none" stroke="#087208" stroke-width="1.75"/><path d="M371.9 481 H379.6 L383.2 485 V496.7 H371.9 Z" fill="#a6aaeb"/><polygon points="379.6,481.3 383.2,485 379.6,485" fill="#1e28d4"/><rect x="373.7" y="487.9" width="8.1" height="7" fill="#1e28d4"/><rect x="374.4" y="490" width="1.6" height="3.6" fill="#e8e8ff"/><rect x="377.0" y="490" width="1.6" height="3.6" fill="#e8e8ff"/><rect x="379.59999999999997" y="490" width="1.6" height="3.6" fill="#e8e8ff"/><path d="M871.7 488.5 L876.5 493.1 L884.9 484.5" fill="none" stroke="#087208" stroke-width="1.75"/><path d="M1024.3 484.3 L1032.6 493.3 M1032.6 484.3 L1024.3 493.3" fill="none" stroke="#f58c8e" stroke-width="1.75"/><path d="M1193.3 484.3 L1201.6 493.3 M1201.6 484.3 L1193.3 493.3" fill="none" stroke="#f58c8e" stroke-width="1.75"/><path d="M1388.7 488.5 L1393.5 493.1 L1401.9 484.5" fill="none" stroke="#087208" stroke-width="1.75"/><path d="M1601.7 488.5 L1606.5 493.1 L1614.9 484.5" fill="none" stroke="#087208" stroke-width="1.75"/><path d="M1753.7 488.5 L1758.5 493.1 L1766.9 484.5" fill="none" stroke="#087208" stroke-width="1.75"/><path d="M371.9 521 H379.6 L383.2 525 V536.7 H371.9 Z" fill="#a6aaeb"/><polygon points="379.6,521.3 383.2,525 379.6,525" fill="#1e28d4"/><rect x="373.7" y="527.9" width="8.1" height="7" fill="#1e28d4"/><rect x="374.4" y="530" width="1.6" height="3.6" fill="#e8e8ff"/><rect x="377.0" y="530" width="1.6" height="3.6" fill="#e8e8ff"/><rect x="379.59999999999997" y="530" width="1.6" height="3.6" fill="#e8e8ff"/><path d="M872.3 524.3 L880.6 533.3 M880.6 524.3 L872.3 533.3" fill="none" stroke="#f58c8e" stroke-width="1.75"/><path d="M1024.3 524.3 L1032.6 533.3 M1032.6 524.3 L1024.3 533.3" fill="none" stroke="#f58c8e" stroke-width="1.75"/><path d="M1193.3 524.3 L1201.6 533.3 M1201.6 524.3 L1193.3 533.3" fill="none" stroke="#f58c8e" stroke-width="1.75"/><path d="M1389.3 524.3 L1397.6 533.3 M1397.6 524.3 L1389.3 533.3" fill="none" stroke="#f58c8e" stroke-width="1.75"/><path d="M1601.7 528.5 L1606.5 533.1 L1614.9 524.5" fill="none" stroke="#087208" stroke-width="1.75"/><path d="M1753.7 528.5 L1758.5 533.1 L1766.9 524.5" fill="none" stroke="#087208" stroke-width="1.75"/><path d="M371.9 561 H379.6 L383.2 565 V576.7 H371.9 Z" fill="#a6aaeb"/><polygon points="379.6,561.3 383.2,565 379.6,565" fill="#1e28d4"/><rect x="373.7" y="567.9" width="8.1" height="7" fill="#1e28d4"/><rect x="374.4" y="570" width="1.6" height="3.6" fill="#e8e8ff"/><rect x="377.0" y="570" width="1.6" height="3.6" fill="#e8e8ff"/><rect x="379.59999999999997" y="570" width="1.6" height="3.6" fill="#e8e8ff"/><path d="M871.7 568.5 L876.5 573.1 L884.9 564.5" fill="none" stroke="#087208" stroke-width="1.75"/><path d="M1024.3 564.3 L1032.6 573.3 M1032.6 564.3 L1024.3 573.3" fill="none" stroke="#f58c8e" stroke-width="1.75"/><path d="M1193.3 564.3 L1201.6 573.3 M1201.6 564.3 L1193.3 573.3" fill="none" stroke="#f58c8e" stroke-width="1.75"/><path d="M1389.3 564.3 L1397.6 573.3 M1397.6 564.3 L1389.3 573.3" fill="none" stroke="#f58c8e" stroke-width="1.75"/><path d="M1601.7 568.5 L1606.5 573.1 L1614.9 564.5" fill="none" stroke="#087208" stroke-width="1.75"/><path d="M1753.7 568.5 L1758.5 573.1 L1766.9 564.5" fill="none" stroke="#087208" stroke-width="1.75"/><path d="M371.9 601 H379.6 L383.2 605 V616.7 H371.9 Z" fill="#a6aaeb"/><polygon points="379.6,601.3 383.2,605 379.6,605" fill="#1e28d4"/><rect x="373.7" y="607.9" width="8.1" height="7" fill="#1e28d4"/><rect x="374.4" y="610" width="1.6" height="3.6" fill="#e8e8ff"/><rect x="377.0" y="610" width="1.6" height="3.6" fill="#e8e8ff"/><rect x="379.59999999999997" y="610" width="1.6" height="3.6" fill="#e8e8ff"/><path d="M871.7 608.5 L876.5 613.1 L884.9 604.5" fill="none" stroke="#087208" stroke-width="1.75"/><path d="M1024.3 604.3 L1032.6 613.3 M1032.6 604.3 L1024.3 613.3" fill="none" stroke="#f58c8e" stroke-width="1.75"/><path d="M1193.3 604.3 L1201.6 613.3 M1201.6 604.3 L1193.3 613.3" fill="none" stroke="#f58c8e" stroke-width="1.75"/><path d="M1389.3 604.3 L1397.6 613.3 M1397.6 604.3 L1389.3 613.3" fill="none" stroke="#f58c8e" stroke-width="1.75"/><path d="M1601.7 608.5 L1606.5 613.1 L1614.9 604.5" fill="none" stroke="#087208" stroke-width="1.75"/><path d="M1753.7 608.5 L1758.5 613.1 L1766.9 604.5" fill="none" stroke="#087208" stroke-width="1.75"/><path d="M371.9 641 H379.6 L383.2 645 V656.7 H371.9 Z" fill="#a6aaeb"/><polygon points="379.6,641.3 383.2,645 379.6,645" fill="#1e28d4"/><rect x="373.7" y="647.9" width="8.1" height="7" fill="#1e28d4"/><rect x="374.4" y="650" width="1.6" height="3.6" fill="#e8e8ff"/><rect x="377.0" y="650" width="1.6" height="3.6" fill="#e8e8ff"/><rect x="379.59999999999997" y="650" width="1.6" height="3.6" fill="#e8e8ff"/><path d="M872.3 644.3 L880.6 653.3 M880.6 644.3 L872.3 653.3" fill="none" stroke="#f58c8e" stroke-width="1.75"/><path d="M1024.3 644.3 L1032.6 653.3 M1032.6 644.3 L1024.3 653.3" fill="none" stroke="#f58c8e" stroke-width="1.75"/><path d="M1193.3 644.3 L1201.6 653.3 M1201.6 644.3 L1193.3 653.3" fill="none" stroke="#f58c8e" stroke-width="1.75"/><path d="M1389.3 644.3 L1397.6 653.3 M1397.6 644.3 L1389.3 653.3" fill="none" stroke="#f58c8e" stroke-width="1.75"/><path d="M1601.7 648.5 L1606.5 653.1 L1614.9 644.5" fill="none" stroke="#087208" stroke-width="1.75"/><path d="M1753.7 648.5 L1758.5 653.1 L1766.9 644.5" fill="none" stroke="#087208" stroke-width="1.75"/><path d="M371.9 681 H379.6 L383.2 685 V696.7 H371.9 Z" fill="#a6aaeb"/><polygon points="379.6,681.3 383.2,685 379.6,685" fill="#1e28d4"/><rect x="373.7" y="687.9" width="8.1" height="7" fill="#1e28d4"/><rect x="374.4" y="690" width="1.6" height="3.6" fill="#e8e8ff"/><rect x="377.0" y="690" width="1.6" height="3.6" fill="#e8e8ff"/><rect x="379.59999999999997" y="690" width="1.6" height="3.6" fill="#e8e8ff"/><path d="M872.3 684.3 L880.6 693.3 M880.6 684.3 L872.3 693.3" fill="none" stroke="#f58c8e" stroke-width="1.75"/><path d="M1024.3 684.3 L1032.6 693.3 M1032.6 684.3 L1024.3 693.3" fill="none" stroke="#f58c8e" stroke-width="1.75"/><path d="M1193.3 684.3 L1201.6 693.3 M1201.6 684.3 L1193.3 693.3" fill="none" stroke="#f58c8e" stroke-width="1.75"/><path d="M1389.3 684.3 L1397.6 693.3 M1397.6 684.3 L1389.3 693.3" fill="none" stroke="#f58c8e" stroke-width="1.75"/><path d="M1601.7 688.5 L1606.5 693.1 L1614.9 684.5" fill="none" stroke="#087208" stroke-width="1.75"/><path d="M1753.7 688.5 L1758.5 693.1 L1766.9 684.5" fill="none" stroke="#087208" stroke-width="1.75"/><path d="M371.9 721 H379.6 L383.2 725 V736.7 H371.9 Z" fill="#a6aaeb"/><polygon points="379.6,721.3 383.2,725 379.6,725" fill="#1e28d4"/><rect x="373.7" y="727.9" width="8.1" height="7" fill="#1e28d4"/><rect x="374.4" y="730" width="1.6" height="3.6" fill="#e8e8ff"/><rect x="377.0" y="730" width="1.6" height="3.6" fill="#e8e8ff"/><rect x="379.59999999999997" y="730" width="1.6" height="3.6" fill="#e8e8ff"/><path d="M872.3 724.3 L880.6 733.3 M880.6 724.3 L872.3 733.3" fill="none" stroke="#f58c8e" stroke-width="1.75"/><path d="M1024.3 724.3 L1032.6 733.3 M1032.6 724.3 L1024.3 733.3" fill="none" stroke="#f58c8e" stroke-width="1.75"/><path d="M1193.3 724.3 L1201.6 733.3 M1201.6 724.3 L1193.3 733.3" fill="none" stroke="#f58c8e" stroke-width="1.75"/><path d="M1389.3 724.3 L1397.6 733.3 M1397.6 724.3 L1389.3 733.3" fill="none" stroke="#f58c8e" stroke-width="1.75"/><path d="M1601.7 728.5 L1606.5 733.1 L1614.9 724.5" fill="none" stroke="#087208" stroke-width="1.75"/><path d="M1753.7 728.5 L1758.5 733.1 L1766.9 724.5" fill="none" stroke="#087208" stroke-width="1.75"/><path d="M371.9 761 H379.6 L383.2 765 V776.7 H371.9 Z" fill="#a6aaeb"/><polygon points="379.6,761.3 383.2,765 379.6,765" fill="#1e28d4"/><rect x="373.7" y="767.9" width="8.1" height="7" fill="#1e28d4"/><rect x="374.4" y="770" width="1.6" height="3.6" fill="#e8e8ff"/><rect x="377.0" y="770" width="1.6" height="3.6" fill="#e8e8ff"/><rect x="379.59999999999997" y="770" width="1.6" height="3.6" fill="#e8e8ff"/><path d="M871.7 768.5 L876.5 773.1 L884.9 764.5" fill="none" stroke="#087208" stroke-width="1.75"/><path d="M1024.3 764.3 L1032.6 773.3 M1032.6 764.3 L1024.3 773.3" fill="none" stroke="#f58c8e" stroke-width="1.75"/><path d="M1193.3 764.3 L1201.6 773.3 M1201.6 764.3 L1193.3 773.3" fill="none" stroke="#f58c8e" stroke-width="1.75"/><path d="M1389.3 764.3 L1397.6 773.3 M1397.6 764.3 L1389.3 773.3" fill="none" stroke="#f58c8e" stroke-width="1.75"/><path d="M1601.7 768.5 L1606.5 773.1 L1614.9 764.5" fill="none" stroke="#087208" stroke-width="1.75"/><path d="M1753.7 768.5 L1758.5 773.1 L1766.9 764.5" fill="none" stroke="#087208" stroke-width="1.75"/><path d="M371.9 801 H379.6 L383.2 805 V816.7 H371.9 Z" fill="#a6aaeb"/><polygon points="379.6,801.3 383.2,805 379.6,805" fill="#1e28d4"/><rect x="373.7" y="807.9" width="8.1" height="7" fill="#1e28d4"/><rect x="374.4" y="810" width="1.6" height="3.6" fill="#e8e8ff"/><rect x="377.0" y="810" width="1.6" height="3.6" fill="#e8e8ff"/><rect x="379.59999999999997" y="810" width="1.6" height="3.6" fill="#e8e8ff"/><path d="M872.3 804.3 L880.6 813.3 M880.6 804.3 L872.3 813.3" fill="none" stroke="#f58c8e" stroke-width="1.75"/><path d="M1024.3 804.3 L1032.6 813.3 M1032.6 804.3 L1024.3 813.3" fill="none" stroke="#f58c8e" stroke-width="1.75"/><path d="M1193.3 804.3 L1201.6 813.3 M1201.6 804.3 L1193.3 813.3" fill="none" stroke="#f58c8e" stroke-width="1.75"/><path d="M1389.3 804.3 L1397.6 813.3 M1397.6 804.3 L1389.3 813.3" fill="none" stroke="#f58c8e" stroke-width="1.75"/><path d="M1601.7 808.5 L1606.5 813.1 L1614.9 804.5" fill="none" stroke="#087208" stroke-width="1.75"/><path d="M1753.7 808.5 L1758.5 813.1 L1766.9 804.5" fill="none" stroke="#087208" stroke-width="1.75"/><path d="M371.9 841 H379.6 L383.2 845 V856.7 H371.9 Z" fill="#a6aaeb"/><polygon points="379.6,841.3 383.2,845 379.6,845" fill="#1e28d4"/><rect x="373.7" y="847.9" width="8.1" height="7" fill="#1e28d4"/><rect x="374.4" y="850" width="1.6" height="3.6" fill="#e8e8ff"/><rect x="377.0" y="850" width="1.6" height="3.6" fill="#e8e8ff"/><rect x="379.59999999999997" y="850" width="1.6" height="3.6" fill="#e8e8ff"/><path d="M871.7 848.5 L876.5 853.1 L884.9 844.5" fill="none" stroke="#087208" stroke-width="1.75"/><path d="M1024.3 844.3 L1032.6 853.3 M1032.6 844.3 L1024.3 853.3" fill="none" stroke="#f58c8e" stroke-width="1.75"/><path d="M1192.7 848.5 L1197.5 853.1 L1205.9 844.5" fill="none" stroke="#087208" stroke-width="1.75"/><path d="M1389.3 844.3 L1397.6 853.3 M1397.6 844.3 L1389.3 853.3" fill="none" stroke="#f58c8e" stroke-width="1.75"/><path d="M1601.7 848.5 L1606.5 853.1 L1614.9 844.5" fill="none" stroke="#087208" stroke-width="1.75"/><path d="M1753.7 848.5 L1758.5 853.1 L1766.9 844.5" fill="none" stroke="#087208" stroke-width="1.75"/><path d="M371.9 881 H379.6 L383.2 885 V896.7 H371.9 Z" fill="#a6aaeb"/><polygon points="379.6,881.3 383.2,885 379.6,885" fill="#1e28d4"/><rect x="373.7" y="887.9" width="8.1" height="7" fill="#1e28d4"/><rect x="374.4" y="890" width="1.6" height="3.6" fill="#e8e8ff"/><rect x="377.0" y="890" width="1.6" height="3.6" fill="#e8e8ff"/><rect x="379.59999999999997" y="890" width="1.6" height="3.6" fill="#e8e8ff"/><path d="M871.7 888.5 L876.5 893.1 L884.9 884.5" fill="none" stroke="#087208" stroke-width="1.75"/><path d="M1024.3 884.3 L1032.6 893.3 M1032.6 884.3 L1024.3 893.3" fill="none" stroke="#f58c8e" stroke-width="1.75"/><path d="M1193.3 884.3 L1201.6 893.3 M1201.6 884.3 L1193.3 893.3" fill="none" stroke="#f58c8e" stroke-width="1.75"/><path d="M1389.3 884.3 L1397.6 893.3 M1397.6 884.3 L1389.3 893.3" fill="none" stroke="#f58c8e" stroke-width="1.75"/><path d="M1601.7 888.5 L1606.5 893.1 L1614.9 884.5" fill="none" stroke="#087208" stroke-width="1.75"/><path d="M1753.7 888.5 L1758.5 893.1 L1766.9 884.5" fill="none" stroke="#087208" stroke-width="1.75"/></svg>
<svg style="left:0;top:0;filter:drop-shadow(2px 3px 3px rgba(0,0,0,0.4))" width="1" height="1"><polygon points="449.2,130.9 476.5,139.8 471.6,142.9 536.6,205.6 537,206.8 535.8,207.6 534.6,207.4 462.9,152.1 460.1,156.5" fill="#94d43c"/></svg>
<div class="a" style="left:1903px;top:0;width:17px;height:919px;background:#f1f1f1"></div>
<div class="a" style="left:1905px;top:17px;width:13px;height:769px;background:#c1c1c1"></div>
<svg style="left:0;top:0" width="1" height="1"><polygon points="1907.5,12 1915.5,12 1911.5,7.5" fill="#a3a3a3"/><polygon points="1907.5,907.5 1915.5,907.5 1911.5,912" fill="#505050"/></svg>
</body></html>
